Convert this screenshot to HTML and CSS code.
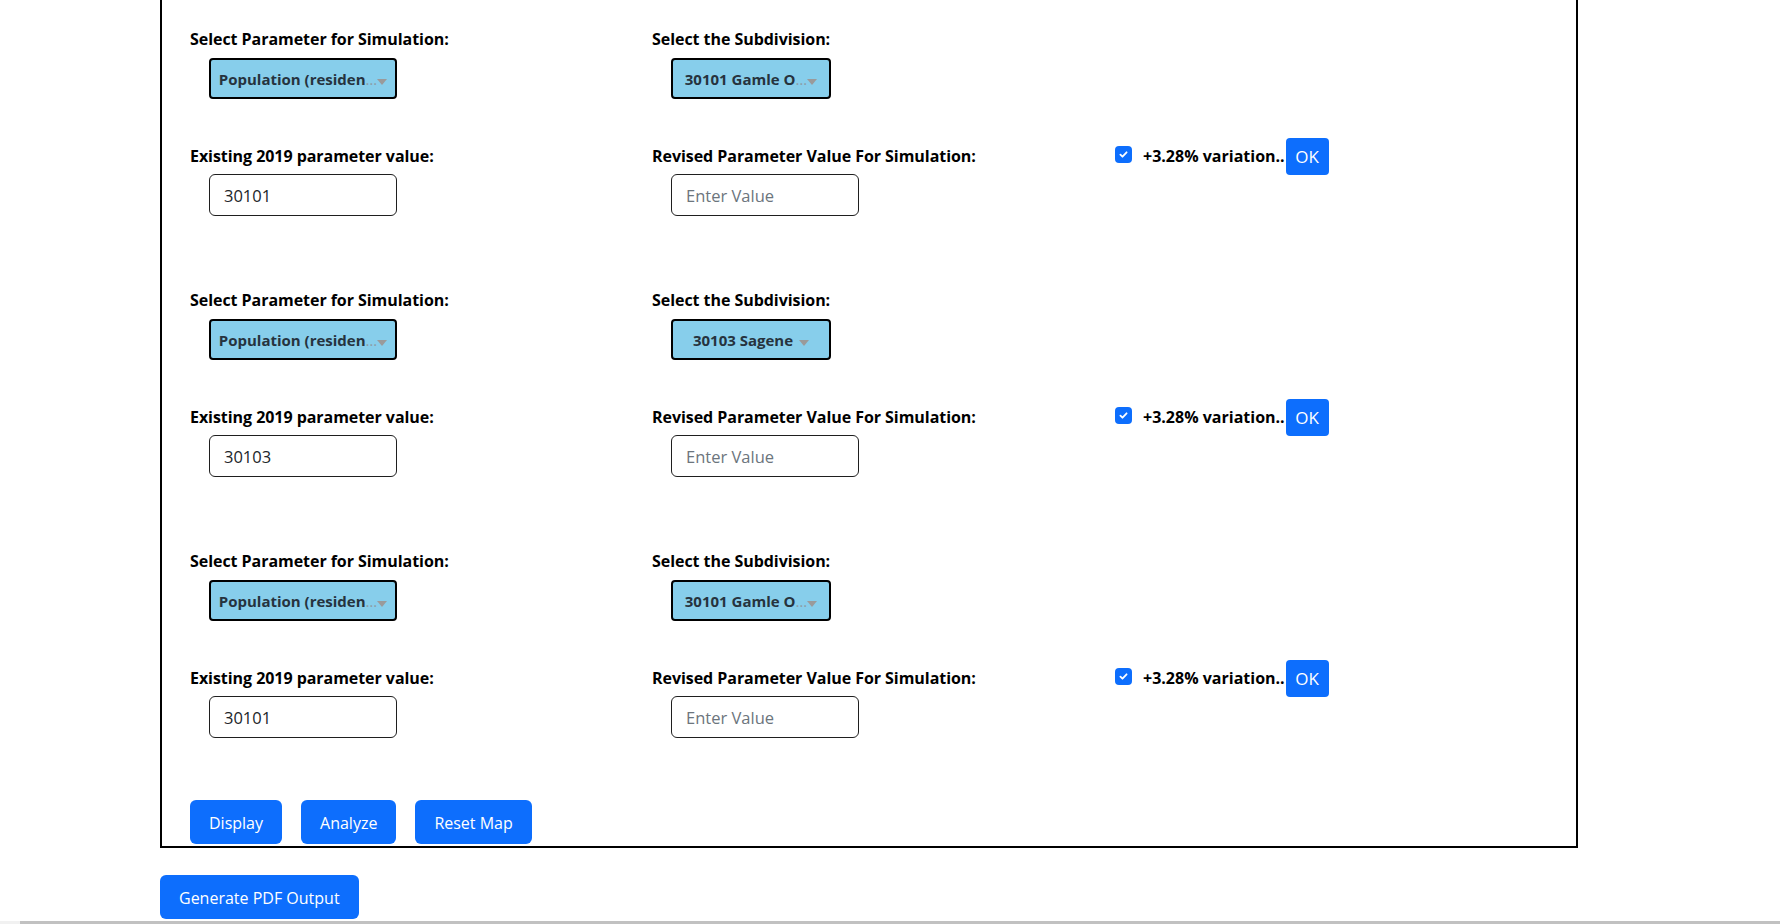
FILE: index.html
```html
<!DOCTYPE html>
<html lang="en">
<head>
<meta charset="utf-8">
<title>Simulation</title>
<link rel="stylesheet" href="styles.css">
</head>
<body>
<div class="page">
  <div class="panel">
    <section class="block">
      <div class="row">
        <div class="field">
          <label class="lbl">Select Parameter for Simulation:</label>
          <div class="dd dd-wide"><span class="dd-text">Population (residen</span><span class="dd-more">…</span><span class="caret"></span></div>
        </div>
        <div class="field">
          <label class="lbl">Select the Subdivision:</label>
          <div class="dd dd-narrow"><span class="dd-text">30101 Gamle O</span><span class="dd-more">…</span><span class="caret"></span></div>
        </div>
      </div>
      <div class="row row-values">
        <div class="field">
          <label class="lbl">Existing 2019 parameter value:</label>
          <input class="inp" type="text" value="30101">
        </div>
        <div class="field">
          <label class="lbl">Revised Parameter Value For Simulation:</label>
          <input class="inp" type="text" placeholder="Enter Value">
        </div>
        <div class="check-col">
          <span class="chk"><svg viewBox="0 0 16 16" width="11" height="11"><path d="M3.5 8.2l3 3 6-6.4" fill="none" stroke="#fff" stroke-width="2.6" stroke-linecap="round" stroke-linejoin="round"/></svg></span>
          <span class="var">+3.28% variation..</span>
          <button class="ok" type="button">OK</button>
        </div>
      </div>
    </section>

    <section class="block">
      <div class="row">
        <div class="field">
          <label class="lbl">Select Parameter for Simulation:</label>
          <div class="dd dd-wide"><span class="dd-text">Population (residen</span><span class="dd-more">…</span><span class="caret"></span></div>
        </div>
        <div class="field">
          <label class="lbl">Select the Subdivision:</label>
          <div class="dd dd-narrow"><span class="dd-text">30103 Sagene</span><span class="caret"></span></div>
        </div>
      </div>
      <div class="row row-values">
        <div class="field">
          <label class="lbl">Existing 2019 parameter value:</label>
          <input class="inp" type="text" value="30103">
        </div>
        <div class="field">
          <label class="lbl">Revised Parameter Value For Simulation:</label>
          <input class="inp" type="text" placeholder="Enter Value">
        </div>
        <div class="check-col">
          <span class="chk"><svg viewBox="0 0 16 16" width="11" height="11"><path d="M3.5 8.2l3 3 6-6.4" fill="none" stroke="#fff" stroke-width="2.6" stroke-linecap="round" stroke-linejoin="round"/></svg></span>
          <span class="var">+3.28% variation..</span>
          <button class="ok" type="button">OK</button>
        </div>
      </div>
    </section>

    <section class="block">
      <div class="row">
        <div class="field">
          <label class="lbl">Select Parameter for Simulation:</label>
          <div class="dd dd-wide"><span class="dd-text">Population (residen</span><span class="dd-more">…</span><span class="caret"></span></div>
        </div>
        <div class="field">
          <label class="lbl">Select the Subdivision:</label>
          <div class="dd dd-narrow"><span class="dd-text">30101 Gamle O</span><span class="dd-more">…</span><span class="caret"></span></div>
        </div>
      </div>
      <div class="row row-values">
        <div class="field">
          <label class="lbl">Existing 2019 parameter value:</label>
          <input class="inp" type="text" value="30101">
        </div>
        <div class="field">
          <label class="lbl">Revised Parameter Value For Simulation:</label>
          <input class="inp" type="text" placeholder="Enter Value">
        </div>
        <div class="check-col">
          <span class="chk"><svg viewBox="0 0 16 16" width="11" height="11"><path d="M3.5 8.2l3 3 6-6.4" fill="none" stroke="#fff" stroke-width="2.6" stroke-linecap="round" stroke-linejoin="round"/></svg></span>
          <span class="var">+3.28% variation..</span>
          <button class="ok" type="button">OK</button>
        </div>
      </div>
    </section>

    <div class="actions">
      <button class="btn" type="button">Display</button>
      <button class="btn" type="button">Analyze</button>
      <button class="btn" type="button">Reset Map</button>
    </div>
  </div>

  <button class="btn pdf" type="button">Generate PDF Output</button>
</div>
<div class="hscroll"><div class="thumb"></div></div>
</body>
</html>
```

FILE: styles.css
```css
* { box-sizing: border-box; }

html { overflow: hidden; }

body {
  margin: 0;
  background: #fff;
  color: #000;
  font-family: "Open Sans", "Noto Sans", sans-serif;
}

.page {
  padding-left: 160px;
}

.panel {
  width: 1418px;
  border: 2px solid #000;
  border-top: 0;
  padding: 27px 0 2px 28px;
}

.block + .block { margin-top: 72px; }

.row {
  display: grid;
  grid-template-columns: 462px 462px 1fr;
  align-items: start;
}

.row-values { margin-top: 45px; }

.lbl {
  display: block;
  font-size: 16px;
  font-weight: 700;
  line-height: 24px;
  color: #000;
  letter-spacing: -0.05px;
}

.dd {
  margin: 7px 0 0 19px;
  height: 41px;
  border: 2px solid #000;
  border-radius: 4px;
  background: #87ceeb;
  display: flex;
  align-items: center;
  justify-content: center;
  padding: 0 8px;
  color: #26333e;
  font-size: 15px;
  font-weight: 700;
  white-space: nowrap;
}

.dd-wide { width: 188px; }
.dd-narrow { width: 160px; }

.dd-more {
  color: #8d9ba6;
  font-weight: 400;
}

.caret {
  flex: none;
  width: 0;
  height: 0;
  margin: 6px 0 0 0;
  border-left: 5px solid transparent;
  border-right: 5px solid transparent;
  border-top: 6px solid #9a9a9a;
}

.dd-text + .caret { margin-left: 6px; }

.inp {
  display: block;
  margin: 6px 0 0 19px;
  width: 188px;
  height: 42px;
  border: 1px solid #1f1f1f;
  border-radius: 6px;
  padding: 0 14px;
  font-family: inherit;
  font-size: 16.5px;
  color: #212529;
  background: #fff;
}

.inp::placeholder { color: #6c757d; }

.check-col {
  display: flex;
  align-items: center;
  height: 24px;
}

.chk {
  flex: none;
  width: 17px;
  height: 17px;
  border-radius: 4px;
  background: #0d6efd;
  display: flex;
  align-items: center;
  justify-content: center;
  align-self: flex-start;
  margin: 2px 11px 0 1px;
}

.var {
  font-size: 16px;
  font-weight: 700;
  white-space: nowrap;
}

.ok {
  flex: none;
  width: 43px;
  height: 37px;
  margin-left: 1px;
  border: 0;
  border-radius: 4px;
  background: #0d6efd;
  color: #fff;
  font-family: inherit;
  font-size: 17px;
  padding: 0;
}

.actions {
  display: flex;
  gap: 19px;
  margin-top: 62px;
}

.btn {
  height: 44px;
  padding: 0 19px;
  border: 0;
  border-radius: 6px;
  background: #0d6efd;
  color: #fff;
  font-family: inherit;
  font-size: 16px;
  line-height: 46px;
}

.pdf {
  display: block;
  margin-top: 27px;
}

.hscroll {
  margin-top: 2px;
  height: 3px;
  background: #f1f1f1;
  padding-left: 20px;
}

.thumb {
  height: 3px;
  background: #c1c1c1;
}
```
